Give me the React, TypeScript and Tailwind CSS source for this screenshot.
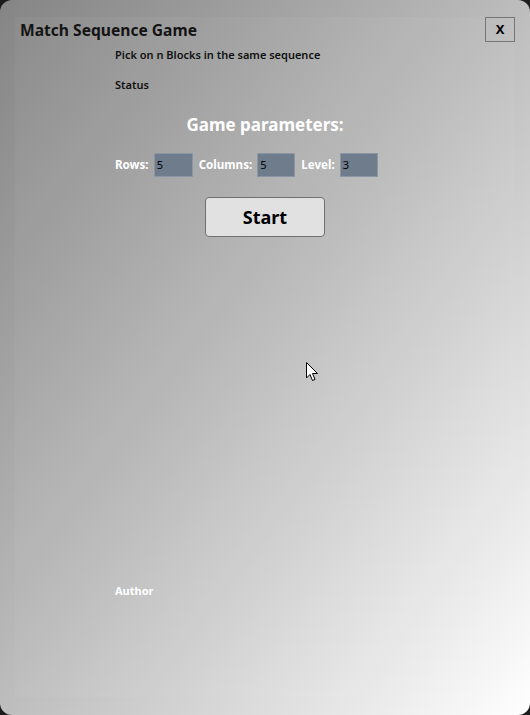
export default function App() {
  return (
    <div className="w-[530px] h-[715px] bg-[#1c1c1c] font-['Noto_Sans',sans-serif]">
      <div className="relative w-full h-full rounded-[12px] bg-linear-to-br from-[#858585] via-[#bdbdbd] to-[#ffffff] pt-[17px] px-[15px] overflow-hidden">
        <div className="h-[680px] w-[500px] bg-white/[0.04] flex flex-col">
          <div className="flex items-start justify-between">
            <h1 className="ml-[5px] mt-[3px] text-[15.6px] font-bold text-[#141414] leading-[20px]">Match Sequence Game</h1>
            <button className="w-[30px] h-[25px] border border-[#767676] text-[13px] font-bold text-black leading-none">X</button>
          </div>
          <div className="pl-[100px] flex flex-col">
            <p className="mt-[5px] text-[11px] font-semibold text-[#111] leading-[16px]">Pick on n Blocks in the same sequence</p>
            <p className="mt-[14px] text-[11px] font-semibold text-[#111] leading-[16px]">Status</p>
          </div>
          <h2 className="mt-[20px] text-center text-[17px] font-bold text-white leading-[24px]">Game parameters:</h2>
          <div className="mt-[16px] pl-[100px] flex items-center text-[11.6px] font-bold text-white">
            <span>Rows:</span>
            <div className="ml-[5px] w-[39px] h-[24px] bg-[#6f7c8c] border border-[#8a96a3] pl-[2px] flex items-center text-black font-normal text-[11px]">5</div>
            <span className="ml-[6px]">Columns:</span>
            <div className="ml-[5px] w-[38px] h-[24px] bg-[#6f7c8c] border border-[#8a96a3] pl-[2px] flex items-center text-black font-normal text-[11px]">5</div>
            <span className="ml-[6px]">Level:</span>
            <div className="ml-[5px] w-[38px] h-[24px] bg-[#6f7c8c] border border-[#8a96a3] pl-[2px] flex items-center text-black font-normal text-[11px]">3</div>
          </div>
          <div className="mt-[20px] flex justify-center">
            <button className="w-[120px] h-[40px] rounded-[4px] bg-[#e1e1e1] border border-[#707070] text-[18px] font-bold text-black">Start</button>
          </div>
          <p className="mt-[346px] pl-[100px] text-[11px] font-bold text-white leading-[16px]">Author</p>
        </div>
        <svg className="absolute left-[306px] top-[362px]" width="13" height="20" viewBox="0 0 13 20">
          <path d="M0.5 0.5 L0.5 16 L4 12.5 L6.5 18.5 L9 17.5 L6.5 11.5 L11.5 11.5 Z" fill="white" stroke="black" strokeWidth="1" />
        </svg>
      </div>
    </div>
  );
}
